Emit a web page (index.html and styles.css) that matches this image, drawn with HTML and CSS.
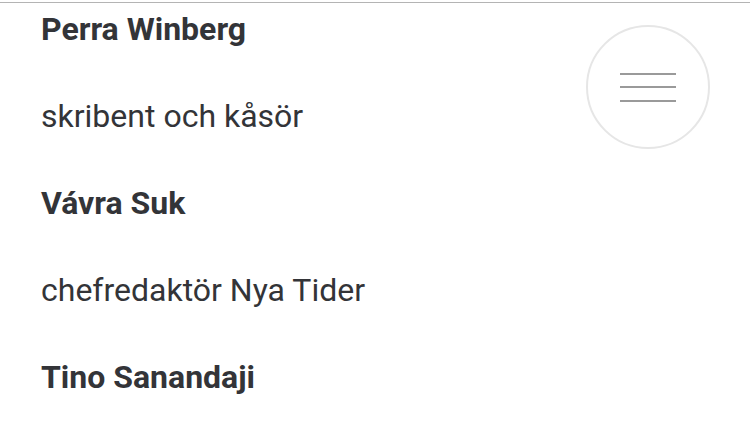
FILE: index.html
```
<!DOCTYPE html>
<html lang="sv">
<head>
    <meta charset="UTF-8">
    <meta name="viewport" content="width=device-width, initial-scale=1.0">
    <title>Medverkande</title>
    <link rel="stylesheet" href="styles.css">
</head>
<body>
    <div class="topbar"></div>
    <div class="page">
        <dl class="people">
            <dt>Perra Winberg</dt>
            <dd>skribent och kåsör</dd>
            <dt>Vávra Suk</dt>
            <dd>chefredaktör Nya Tider</dd>
            <dt>Tino Sanandaji</dt>
        </dl>
        <button class="menu-button" aria-label="Meny">
            <span></span>
            <span></span>
            <span></span>
        </button>
    </div>
</body>
</html>
```
FILE: styles.css
```
body {
    margin: 0;
    background-color: #fff;
    font-family: Roboto, "Noto Sans", sans-serif;
    color: #333438;
    overflow: hidden;
}
.topbar {
    height: 2px;
    border-bottom: 1px solid #b4b4b4;
}
.page {
    position: relative;
    padding: 2px 0 0 41px;
}
.people {
    margin: 0;
}
.people dt,
.people dd {
    margin: 0 0 39px 0;
    font-size: 32px;
    line-height: 48px;
}
.people dt {
    font-weight: 700;
}
.people dd {
    font-weight: 400;
}
.menu-button {
    position: absolute;
    top: 22px;
    left: 586px;
    width: 124px;
    height: 124px;
    border: 2px solid #e6e6e6;
    border-radius: 50%;
    background-color: #fff;
    padding: 0;
    display: flex;
    flex-direction: column;
    align-items: center;
    justify-content: center;
    gap: 11.5px;
    cursor: pointer;
}
.menu-button span {
    display: block;
    width: 56px;
    height: 2px;
    background-color: #9a9a9a;
}
```
